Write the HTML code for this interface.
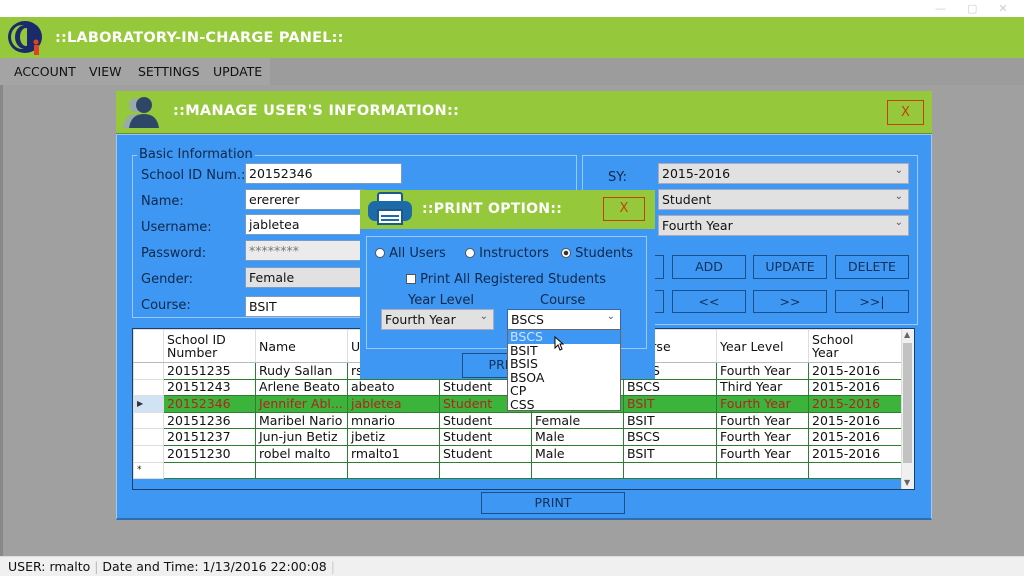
<!DOCTYPE html>
<html><head><style>
*{box-sizing:border-box;margin:0;padding:0}
body{width:1024px;height:576px;position:relative;overflow:hidden;background:#a0a0a0;font-family:"DejaVu Sans","Liberation Sans",sans-serif;font-size:12px;color:#111}
.a{position:absolute}
.blue{background:#3d97f3}
.green{background:#96c83c}
.tb{position:absolute;background:#fff;border:1px solid #7a9cc0;padding:1px 3px;font-size:12.5px;height:21px;line-height:17px}
.cb{position:absolute;background:#e1e1e1;border:1px solid #aab;padding:1px 3px;font-size:12.5px;height:21px;line-height:17px}
.cb:after{content:"⌄";position:absolute;right:5px;top:-2px;font-size:10px;color:#555}
.btn{position:absolute;border:1px solid #1b4f8a;text-align:center;font-size:12.5px;color:#10315a;line-height:22px}
.lbl{position:absolute;font-size:13px;color:#10284a}
.xb{position:absolute;border:1px solid #c2410c;color:#c2410c;text-align:center;font-size:13px}
.mn{position:absolute;top:64px;font-size:12.5px;color:#111}
table{border-collapse:collapse;position:absolute;left:133px;top:329px;background:#fff;table-layout:fixed}
td{border:1px solid #2e7d32;height:16.6px;padding:0 3px;font-size:12.5px;white-space:nowrap;overflow:hidden;line-height:14px}
tr.h td{height:33px;border-color:#ddd;border-bottom:1px solid #bbb;line-height:13px}
td.rh{background:#fff;border-color:#ddd}
tr.sel td{background:#3cb43c;color:#b22222}
tr.sel td.rh{background:#cfe3f5}
</style></head><body>
<div class="a" style="left:0;top:0;width:1024px;height:17px;background:#fff"></div>
<div class="a" style="left:935px;top:2px;color:#ccc;font-size:11px">—&nbsp;&nbsp;&nbsp;&nbsp;&nbsp;&nbsp;▢&nbsp;&nbsp;&nbsp;&nbsp;&nbsp;&nbsp;✕</div>
<div class="a green" style="left:0;top:17px;width:1024px;height:41px"></div>
<svg class="a" style="left:5px;top:19px" width="42" height="38" viewBox="0 0 42 38"><ellipse cx="20" cy="18" rx="17" ry="16" fill="#1a2a6a"/><ellipse cx="17" cy="18" rx="11" ry="12" fill="#96c83c"/><ellipse cx="20" cy="18" rx="10" ry="12" fill="#1a2a6a"/><ellipse cx="21" cy="18" rx="6" ry="9" fill="#96c83c"/><rect x="22" y="6" width="6" height="24" fill="#1a2a6a"/><rect x="29" y="26" width="5" height="10" fill="#d42"/><circle cx="31" cy="23" r="2.5" fill="#d42"/></svg>
<div class="a" style="left:55px;top:30px;color:#fff;font-weight:bold;font-size:14.5px;letter-spacing:.2px">::LABORATORY-IN-CHARGE PANEL::</div>
<div class="a" style="left:0;top:58px;width:1024px;height:27px;background:#9c9c9c"></div>
<div class="a" style="left:0;top:58px;width:270px;height:27px;background:#a4a4a4"></div>
<div class="mn" style="left:14px">ACCOUNT</div>
<div class="mn" style="left:89px">VIEW</div>
<div class="mn" style="left:138px">SETTINGS</div>
<div class="mn" style="left:213px">UPDATE</div>
<div class="a" style="left:0;top:85px;width:3px;height:471px;background:#888"></div>

<div class="a green" style="left:116px;top:91px;width:816px;height:43px;border-bottom:1px solid #6a8a3a"></div>
<svg class="a" style="left:120px;top:95px" width="46" height="34" viewBox="0 0 46 34"><circle cx="16" cy="10" r="7" fill="#9aa"/><path d="M3 33 Q5 19 16 19 Q27 19 29 33Z" fill="#9aa"/><circle cx="24" cy="10" r="8" fill="#2e4766"/><path d="M9 33 Q11 19 24 19 Q37 19 39 33Z" fill="#2e4766"/></svg>
<div class="a" style="left:173px;top:103px;color:#fff;font-weight:bold;font-size:14.5px;letter-spacing:.3px">::MANAGE USER'S INFORMATION::</div>
<div class="xb" style="left:887px;top:100px;width:37px;height:25px;line-height:23px">X</div>
<div class="a blue" style="left:116px;top:134px;width:816px;height:386px;border:1px solid #9cc9f5;border-bottom:2px solid #2f6cb0"></div>

<div class="a" style="left:132px;top:155px;width:445px;height:163px;border:1px solid #9cc9f5"></div>
<div class="a blue" style="left:137px;top:147px;padding:0 2px;font-size:13px;color:#10284a">Basic Information</div>
<div class="lbl" style="left:141px;top:168px">School ID Num.:</div>
<div class="lbl" style="left:141px;top:194px">Name:</div>
<div class="lbl" style="left:141px;top:220px">Username:</div>
<div class="lbl" style="left:141px;top:246px">Password:</div>
<div class="lbl" style="left:141px;top:272px">Gender:</div>
<div class="lbl" style="left:141px;top:298px">Course:</div>
<div class="tb" style="left:245px;top:163px;width:157px">20152346</div>
<div class="tb" style="left:245px;top:189px;width:120px">erererer</div>
<div class="tb" style="left:245px;top:214px;width:120px">jabletea</div>
<div class="tb" style="left:245px;top:240px;width:120px;background:#ebebeb;color:#777">********</div>
<div class="tb" style="left:245px;top:267px;width:120px;background:#e1e1e1">Female</div>
<div class="tb" style="left:245px;top:296px;width:120px">BSIT</div>

<div class="a" style="left:582px;top:155px;width:336px;height:170px;border:1px solid #9cc9f5"></div>
<div class="lbl" style="left:608px;top:170px">SY:</div>
<div class="cb" style="left:658px;top:163px;width:251px">2015-2016</div>
<div class="cb" style="left:658px;top:189px;width:251px">Student</div>
<div class="cb" style="left:658px;top:215px;width:251px">Fourth Year</div>
<div class="btn" style="left:640px;top:255px;width:24px;height:24px"></div>
<div class="btn" style="left:672px;top:255px;width:74px;height:24px">ADD</div>
<div class="btn" style="left:753px;top:255px;width:74px;height:24px">UPDATE</div>
<div class="btn" style="left:835px;top:255px;width:74px;height:24px">DELETE</div>
<div class="btn" style="left:640px;top:290px;width:24px;height:23px"></div>
<div class="btn" style="left:672px;top:290px;width:74px;height:23px">&lt;&lt;</div>
<div class="btn" style="left:753px;top:290px;width:74px;height:23px">&gt;&gt;</div>
<div class="btn" style="left:835px;top:290px;width:74px;height:23px">&gt;&gt;|</div>

<div class="a" style="left:132px;top:328px;width:783px;height:162px;background:#3d97f3;border:1px solid #1b3f6a"></div>
<table>
<colgroup><col style="width:30px"><col style="width:92px"><col style="width:92px"><col style="width:92px"><col style="width:92px"><col style="width:92px"><col style="width:93px"><col style="width:92px"><col style="width:93px"></colgroup>
<tr class="h"><td class="rh"></td><td>School ID<br>Number</td><td>Name</td><td>Username</td><td>Type</td><td>Gender</td><td>Course</td><td>Year Level</td><td>School<br>Year</td></tr>
<tr><td class="rh"></td><td>20151235</td><td>Rudy Sallan</td><td>rsallan</td><td>Student</td><td>Male</td><td>BSCS</td><td>Fourth Year</td><td>2015-2016</td></tr>
<tr><td class="rh"></td><td>20151243</td><td>Arlene Beato</td><td>abeato</td><td>Student</td><td>Female</td><td>BSCS</td><td>Third Year</td><td>2015-2016</td></tr>
<tr class="sel"><td class="rh" style="color:#333;font-size:8px">▶</td><td>20152346</td><td>Jennifer Abl...</td><td>jabletea</td><td>Student</td><td>Female</td><td>BSIT</td><td>Fourth Year</td><td>2015-2016</td></tr>
<tr><td class="rh"></td><td>20151236</td><td>Maribel Nario</td><td>mnario</td><td>Student</td><td>Female</td><td>BSIT</td><td>Fourth Year</td><td>2015-2016</td></tr>
<tr><td class="rh"></td><td>20151237</td><td>Jun-jun Betiz</td><td>jbetiz</td><td>Student</td><td>Male</td><td>BSCS</td><td>Fourth Year</td><td>2015-2016</td></tr>
<tr><td class="rh"></td><td>20151230</td><td>robel malto</td><td>rmalto1</td><td>Student</td><td>Male</td><td>BSIT</td><td>Fourth Year</td><td>2015-2016</td></tr>
<tr><td class="rh" style="font-size:9px">*</td><td></td><td></td><td></td><td></td><td></td><td></td><td></td><td></td></tr>
</table>
<div class="a" style="left:901px;top:329px;width:13px;height:160px;background:#f0f0f0;border-left:1px solid #ddd"></div>
<div class="a" style="left:904px;top:330px;font-size:8px;color:#666">▲</div>
<div class="a" style="left:904px;top:478px;font-size:8px;color:#666">▼</div>
<div class="a" style="left:903px;top:343px;width:9px;height:120px;background:#c2c2c2"></div>
<div class="btn" style="left:481px;top:492px;width:144px;height:22px;line-height:20px">PRINT</div>

<div class="a green" style="left:360px;top:190px;width:295px;height:39px"></div>
<svg class="a" style="left:366px;top:192px" width="48" height="34" viewBox="0 0 48 34"><rect x="12" y="1" width="24" height="10" rx="2" fill="#fff" stroke="#1c5a8c" stroke-width="2"/><rect x="2" y="9" width="44" height="20" rx="7" fill="#1c6aa8"/><rect x="12" y="18" width="24" height="14" fill="#fff" stroke="#1c5a8c" stroke-width="2"/><rect x="15" y="23" width="18" height="2" fill="#1c6aa8"/><rect x="15" y="27" width="18" height="2" fill="#1c6aa8"/></svg>
<div class="a" style="left:422px;top:201px;color:#fff;font-weight:bold;font-size:14px;letter-spacing:.3px">::PRINT OPTION::</div>
<div class="xb" style="left:603px;top:197px;width:42px;height:24px;line-height:22px">X</div>
<div class="a blue" style="left:360px;top:229px;width:295px;height:150px"></div>
<div class="a" style="left:366px;top:236px;width:281px;height:113px;border:1px solid #9cc9f5"></div>
<div class="a" style="left:375px;top:246px;font-size:13px;color:#10284a"><span style="display:inline-block;width:10px;height:10px;border-radius:50%;background:#fff;border:1px solid #555;vertical-align:-1px"></span> All Users</div>
<div class="a" style="left:465px;top:246px;font-size:13px;color:#10284a"><span style="display:inline-block;width:10px;height:10px;border-radius:50%;background:#fff;border:1px solid #555;vertical-align:-1px"></span> Instructors</div>
<div class="a" style="left:561px;top:246px;font-size:13px;color:#10284a"><span style="display:inline-block;width:10px;height:10px;border-radius:50%;background:radial-gradient(#333 35%,#fff 45%);border:1px solid #555;vertical-align:-1px"></span> Students</div>
<div class="a" style="left:406px;top:272px;font-size:13px;color:#10284a"><span style="display:inline-block;width:10px;height:10px;background:#fff;border:1px solid #555;vertical-align:-1px"></span> Print All Registered Students</div>
<div class="lbl" style="left:408px;top:293px">Year Level</div>
<div class="lbl" style="left:540px;top:293px">Course</div>
<div class="cb" style="left:381px;top:309px;width:113px">Fourth Year</div>
<div class="cb" style="left:507px;top:309px;width:114px;background:#fff;border-color:#3367aa">BSCS</div>
<div class="btn" style="left:462px;top:353px;width:90px;height:25px">PRINT</div>
<div class="a" style="left:507px;top:329px;width:114px;height:82px;background:#fff;border:1px solid #666;font-size:12.5px;line-height:13.5px">
<div style="background:#3d97f3;color:#cfe6ff;padding-left:2px">BSCS</div>
<div style="padding-left:2px">BSIT</div><div style="padding-left:2px">BSIS</div><div style="padding-left:2px">BSOA</div><div style="padding-left:2px">CP</div><div style="padding-left:2px">CSS</div></div>
<svg class="a" style="left:554px;top:336px" width="10" height="15" viewBox="0 0 10 15"><path d="M1 1 L1 12 L4 9 L6 14 L8 13 L6 8 L9 8Z" fill="#fff" stroke="#000" stroke-width="1"/></svg>

<div class="a" style="left:0;top:556px;width:1024px;height:20px;background:#f0f0f0;border-top:1px solid #ddd"></div>
<div class="a" style="left:8px;top:559px;font-size:12.5px;color:#111">USER: rmalto <span style="color:#bbb">|</span> Date and Time: 1/13/2016 22:00:08 <span style="color:#ccc">|</span></div>
</body></html>
